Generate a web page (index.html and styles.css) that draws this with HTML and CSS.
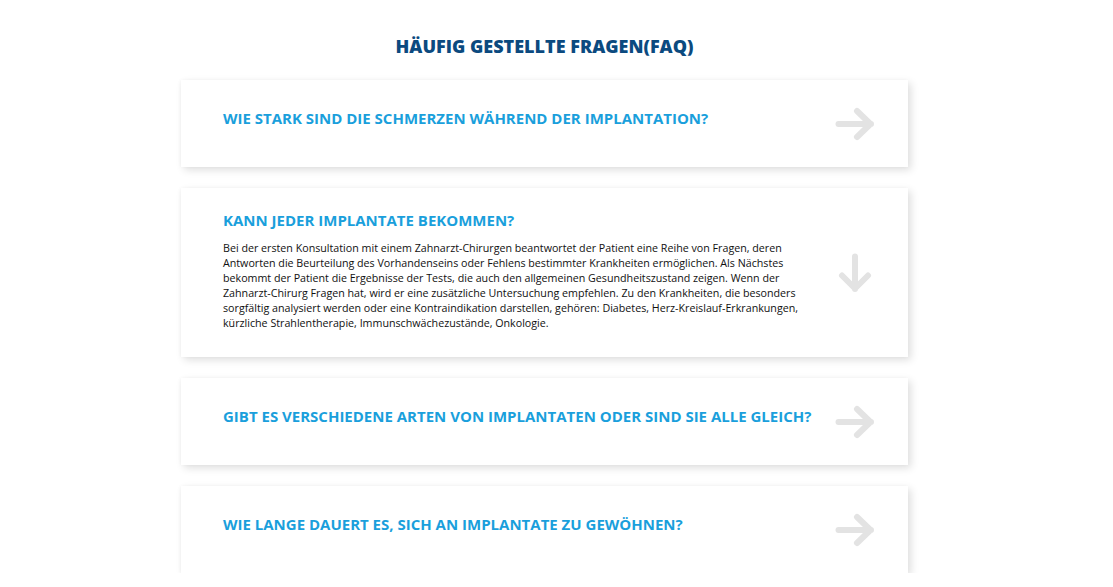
FILE: index.html
```html
<!DOCTYPE html>
<html lang="de">
<head>
<meta charset="utf-8">
<title>FAQ</title>
<link rel="stylesheet" href="styles.css">
</head>
<body>
<section class="faq">
  <h2 class="faq-title">HÄUFIG GESTELLTE FRAGEN(FAQ)</h2>
  <div class="faq-list">
    <div class="card">
      <div class="card-body closed">
        <h3 class="question">WIE STARK SIND DIE SCHMERZEN WÄHREND DER IMPLANTATION?</h3>
      </div>
      <svg class="icon" width="40" height="34" viewBox="0 0 40 34"><path d="M3.5 17H36M22 4L35.5 17L22 30" fill="none" stroke="#e3e3e3" stroke-width="6" stroke-linecap="round" stroke-linejoin="round"/></svg>
    </div>
    <div class="card">
      <div class="card-body open">
        <h3 class="question">KANN JEDER IMPLANTATE BEKOMMEN?</h3>
        <p class="answer">Bei der ersten Konsultation mit einem Zahnarzt-Chirurgen beantwortet der Patient eine Reihe von Fragen, deren Antworten die Beurteilung des Vorhandenseins oder Fehlens bestimmter Krankheiten ermöglichen. Als Nächstes bekommt der Patient die Ergebnisse der Tests, die auch den allgemeinen Gesundheitszustand zeigen. Wenn der Zahnarzt-Chirurg Fragen hat, wird er eine zusätzliche Untersuchung empfehlen. Zu den Krankheiten, die besonders sorgfältig analysiert werden oder eine Kontraindikation darstellen, gehören: Diabetes, Herz-Kreislauf-Erkrankungen, kürzliche Strahlentherapie, Immunschwächezustände, Onkologie.</p>
      </div>
      <svg class="icon" width="40" height="40" viewBox="0 0 40 40"><path d="M20 3.5V36M7 22.5L20 35.5L33 22.5" fill="none" stroke="#e3e3e3" stroke-width="6" stroke-linecap="round" stroke-linejoin="round"/></svg>
    </div>
    <div class="card">
      <div class="card-body closed">
        <h3 class="question">GIBT ES VERSCHIEDENE ARTEN VON IMPLANTATEN ODER SIND SIE ALLE GLEICH?</h3>
      </div>
      <svg class="icon" width="40" height="34" viewBox="0 0 40 34"><path d="M3.5 17H36M22 4L35.5 17L22 30" fill="none" stroke="#e3e3e3" stroke-width="6" stroke-linecap="round" stroke-linejoin="round"/></svg>
    </div>
    <div class="card">
      <div class="card-body closed">
        <h3 class="question">WIE LANGE DAUERT ES, SICH AN IMPLANTATE ZU GEWÖHNEN?</h3>
      </div>
      <svg class="icon" width="40" height="34" viewBox="0 0 40 34"><path d="M3.5 17H36M22 4L35.5 17L22 30" fill="none" stroke="#e3e3e3" stroke-width="6" stroke-linecap="round" stroke-linejoin="round"/></svg>
    </div>
  </div>
</section>
</body>
</html>
```

FILE: styles.css
```css
html, body {
  margin: 0;
  padding: 0;
  background: #ffffff;
}
body {
  font-family: "Open Sans", "Noto Sans", sans-serif;
}
.faq {
  width: 727px;
  margin-left: 181px;
  padding-top: 34px;
}
.faq-title {
  margin: 0 0 22px;
  text-align: center;
  font-size: 18px;
  line-height: 24px;
  font-weight: 800;
  color: #0b4a7f;
}
.faq-list {
  display: flex;
  flex-direction: column;
  gap: 21px;
}
.card {
  display: flex;
  align-items: center;
  background: #ffffff;
  box-shadow: 3px 3px 8px rgba(0, 0, 0, 0.13), -1px 0 3px rgba(0, 0, 0, 0.03);
}
.card-body {
  flex: 1;
  padding-left: 42px;
}
.card-body.closed {
  padding-top: 28px;
  padding-bottom: 39px;
}
.card-body.open {
  padding-top: 22px;
  padding-bottom: 26px;
}
.question {
  margin: 0;
  font-size: 15px;
  line-height: 20px;
  font-weight: 700;
  color: #1a9fdc;
}
.answer {
  margin: 11px 0 0;
  max-width: 595px;
  font-size: 10.7px;
  line-height: 15px;
  color: #111111;
}
.icon {
  flex: none;
  margin-right: 33px;
  margin-left: 20px;
}
```
